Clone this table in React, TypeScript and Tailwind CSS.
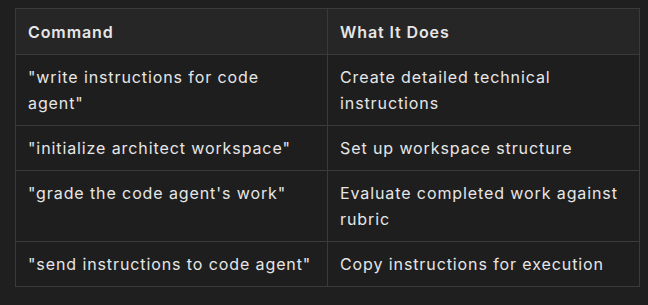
import React from "react";

const rows: [string, string][] = [
  ['"write instructions for code agent"', "Create detailed technical instructions"],
  ['"initialize architect workspace"', "Set up workspace structure"],
  ['"grade the code agent\'s work"', "Evaluate completed work against rubric"],
  ['"send instructions to code agent"', "Copy instructions for execution"],
];

export default function App() {
  return (
    <div
      className="w-[648px] h-[305px] bg-[#1f1f1f] pt-[8px] pl-[15px] text-[#e6e6e6]"
      style={{ fontFamily: "Inter, 'Noto Sans', sans-serif" }}
    >
      <table className="w-[625px] table-fixed border-collapse text-[16px] leading-[26px] tracking-[0.9px]">
        <thead>
          <tr className="bg-[#262626]">
            <th className="w-[312px] border border-[#3a3a3a] px-3 py-[9.5px] text-left font-semibold">
              Command
            </th>
            <th className="border border-[#3a3a3a] px-3 py-[9.5px] text-left font-semibold">
              What It Does
            </th>
          </tr>
        </thead>
        <tbody>
          {rows.map(([a, b], i) => (
            <tr key={i} className="bg-[#1e1e1e]">
              <td className="border border-[#3a3a3a] px-3 pt-[9px] pb-[9px] align-top">{a}</td>
              <td className="border border-[#3a3a3a] px-3 pt-[9px] pb-[9px] align-top">{b}</td>
            </tr>
          ))}
        </tbody>
      </table>
    </div>
  );
}
